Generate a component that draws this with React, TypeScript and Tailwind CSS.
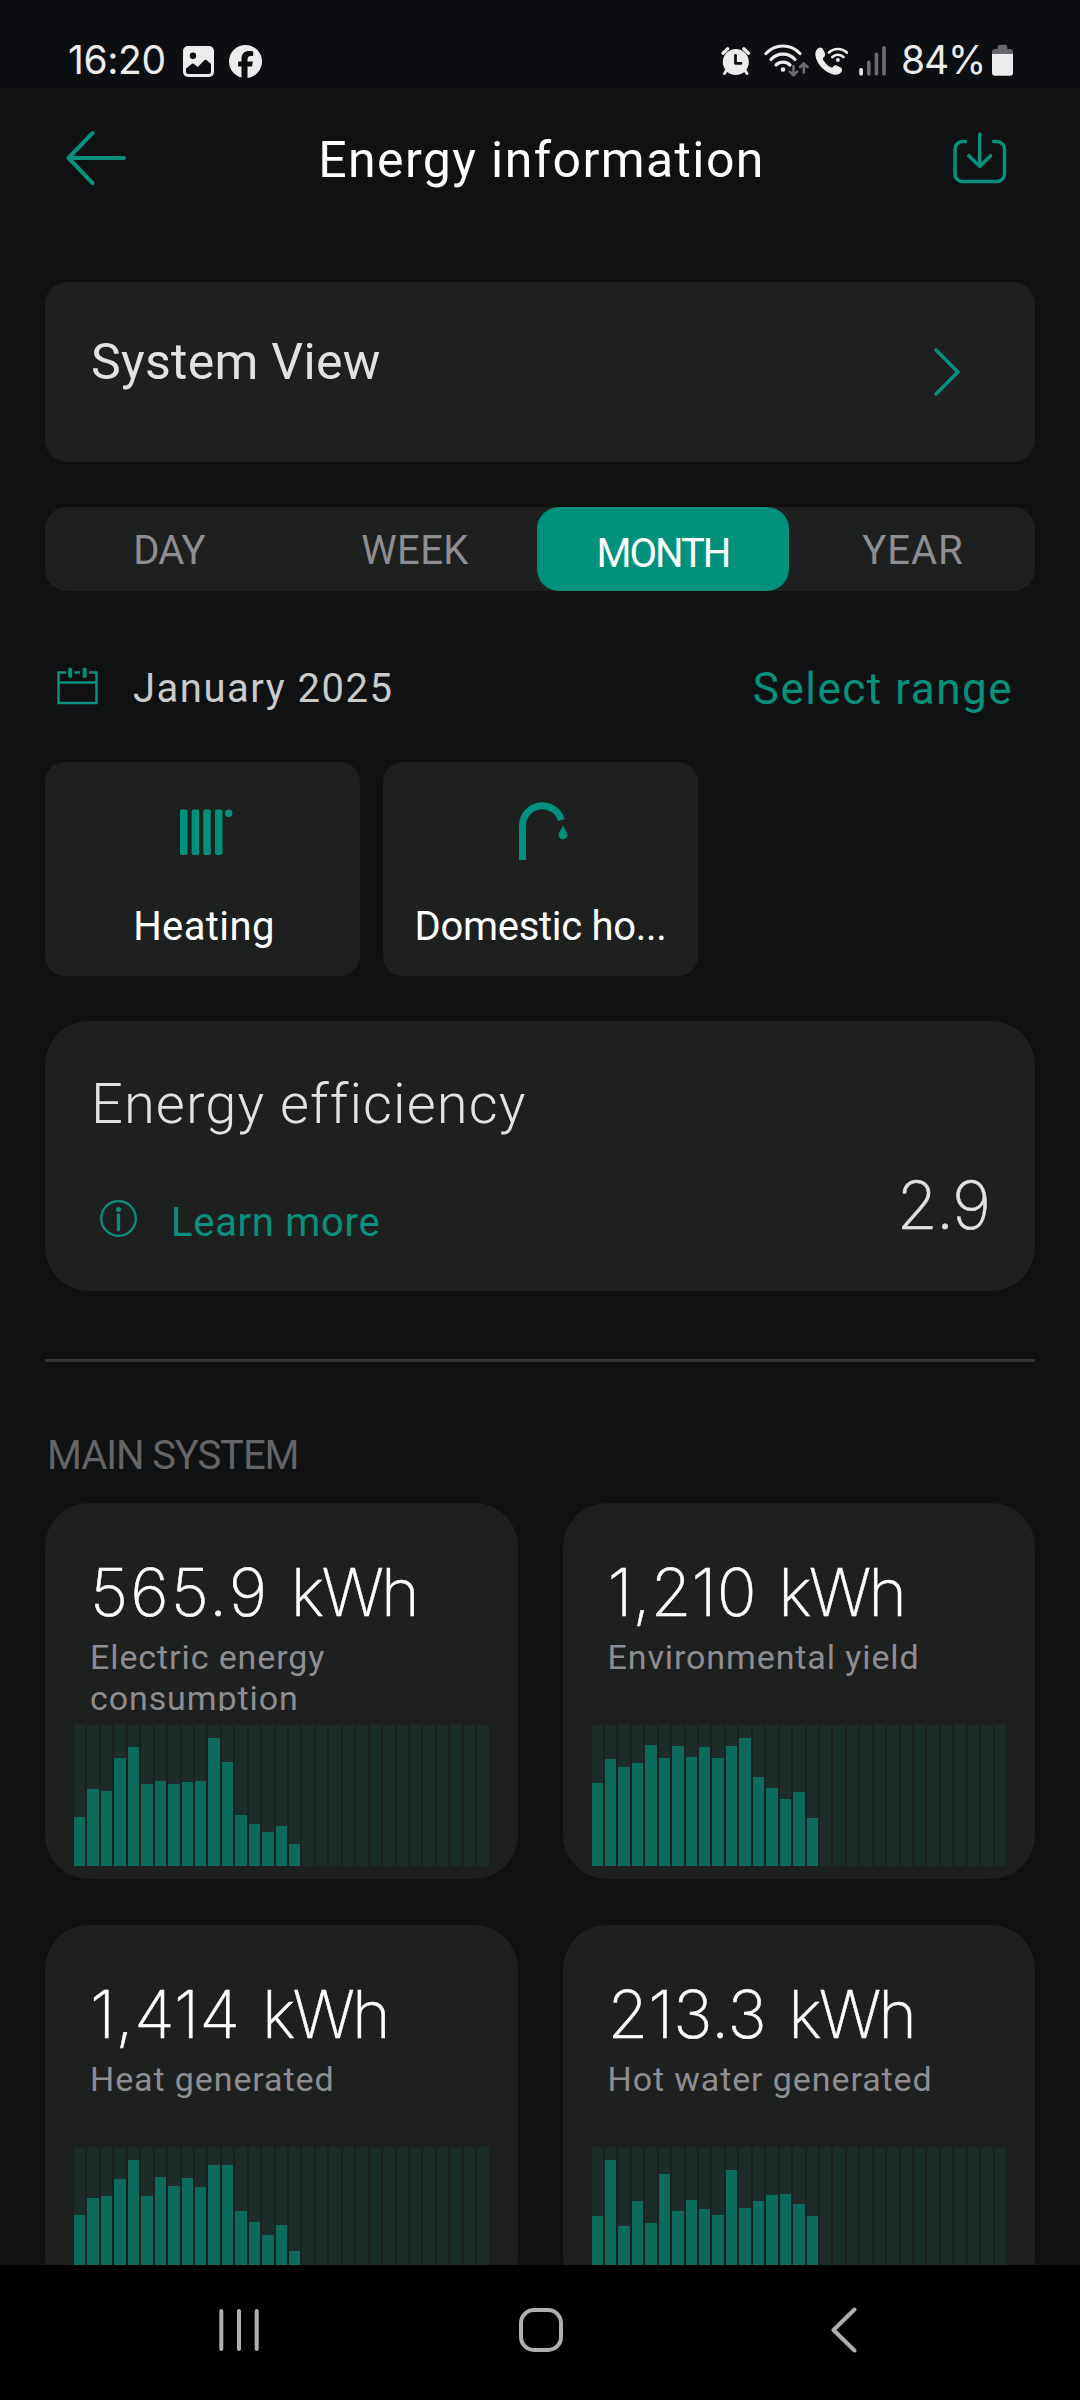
import React, { useState } from 'react'
import { FaFacebook } from 'react-icons/fa6'

interface EnergyCardProps {
  value: string
  label: string
  tracking: string
  bars: number[]
}

const DAYS_IN_MONTH = 31
const CHART_HEIGHT = 141

const cards: EnergyCardProps[] = [
  {
    value: '565.9',
    label: 'Electric energy consumption',
    tracking: 'tracking-[2px]',
    bars: [49, 77, 75.5, 108.5, 119, 82.5, 85.5, 82.5, 84, 85.5, 128, 104, 51, 42, 34, 40.5, 22],
  },
  {
    value: '1,210',
    label: 'Environmental yield',
    tracking: 'tracking-[0px]',
    bars: [83.5, 107, 99, 103.5, 121, 108, 120.5, 109, 119.5, 108, 120, 128, 89, 78, 67.5, 74, 48],
  },
  {
    value: '1,414',
    label: 'Heat generated',
    tracking: 'tracking-[0.4px]',
    bars: [73, 90.5, 92.5, 109, 128, 92, 111, 102, 110, 101, 123.5, 123.5, 77.5, 66, 53, 63, 37],
  },
  {
    value: '213.3',
    label: 'Hot water generated',
    tracking: 'tracking-[0px]',
    bars: [72, 128, 62, 87, 65, 114.5, 77.5, 88, 79, 73, 118.5, 80.5, 87, 93, 94.5, 84, 72.5],
  },
]

const tabs = [
  { id: 'DAY', tracking: 'tracking-[-0.8px]' },
  { id: 'WEEK', tracking: 'tracking-[0.4px]' },
  { id: 'MONTH', tracking: 'tracking-[-2px]' },
  { id: 'YEAR', tracking: 'tracking-[1px]' },
]

function StatusBar() {
  return (
    <div className="h-[88px] shrink-0 flex items-start pl-[68px] pr-[67px] bg-[#0d0e12] text-[#ececec] font-['Inter',sans-serif]">
      <span className="mt-[40px] w-[100px] text-[39px] leading-none tracking-[-0.4px]">16:20</span>
      <svg className="mt-[46px] ml-[15px]" width="31" height="31" viewBox="0 0 31 31">
        <rect width="31" height="31" rx="5" fill="currentColor" />
        <circle cx="10" cy="9.7" r="3.2" fill="#0d0e12" />
        <path d="M3 22.5 9 17.8Q9.8 17.2 10.6 17.8L14.7 21l7-6.9q.9-.9 1.8 0L28 18v7.5q0 2.5-2.5 2.5H5.5Q3 28 3 25.5z" fill="#0d0e12" />
      </svg>
      <FaFacebook className="mt-[45px] ml-[15px]" size={33} />

      {/* Alarm */}
      <svg className="mt-[46px] ml-auto" width="30" height="30" viewBox="0 0 30 30" fill="none" strokeLinecap="round">
        <circle cx="14.8" cy="16" r="13" fill="currentColor" />
        <path d="M2 7.2 6.8 2.8M27.6 7.2 22.8 2.8" stroke="currentColor" strokeWidth="3.2" />
        <path d="M5.5 24.5 3.5 27.5M24 24.5 26 27.5" stroke="currentColor" strokeWidth="3" />
        <path d="M14.5 9.5V17.3H20" stroke="#0d0e12" strokeWidth="2.8" strokeLinejoin="round" />
      </svg>

      {/* Wi-Fi with traffic arrows */}
      <svg className="mt-[44px] ml-[13px]" width="45" height="33" viewBox="0 0 45 33" fill="none" strokeLinecap="round">
        <g stroke="currentColor" strokeWidth="3.2">
          <path d="M2 9.5A23 23 0 0 1 36 9.5" />
          <path d="M7 15.5A16 16 0 0 1 31 15.5" />
          <path d="M12 21A10 10 0 0 1 26 21" />
        </g>
        <circle cx="19" cy="25.5" r="2.3" fill="currentColor" />
        <path d="M29.5 22V31M25.8 27.6 29.5 31.3 33.2 27.6M39.8 28.5V19.5M36.1 23 39.8 19.3 43.5 23" stroke="#6b6c70" strokeWidth="2.6" strokeLinejoin="round" />
      </svg>

      {/* Wi-Fi calling */}
      <svg className="mt-[46px] ml-[6px]" width="34" height="30" viewBox="0 0 34 30" fill="none" strokeLinecap="round">
        <path
          d="M3.2 2.2c2-1.5 4-.8 4.8 1l2 4.5c.6 1.3 0 2.4-1.3 3.5-1 .9-1 1.8-.3 3 1.8 3 3.6 4.9 6.8 6.9 1.2.7 2 .6 2.9-.4 1.1-1.3 2.3-1.9 3.5-1.2l4 2c1.6.8 2 2.4.9 4.2-1.6 2.6-4.6 3.6-8.2 2.7C9.2 26 1.6 17.5.4 9.4 0 6.5.8 3.9 3.2 2.2z"
          fill="currentColor"
        />
        <path d="M14 6.5A13 13 0 0 1 31.8 6.5M17.3 11A8 8 0 0 1 28.4 11" stroke="currentColor" strokeWidth="2.7" />
        <circle cx="22.9" cy="14" r="1.9" fill="currentColor" />
      </svg>

      {/* Signal */}
      <svg className="mt-[45px] ml-[10px]" width="27" height="31" viewBox="0 0 27 31">
        <rect x="0.3" y="23" width="3.6" height="7.5" rx="1.6" fill="currentColor" />
        <rect x="8" y="15.5" width="3.6" height="15" rx="1.6" fill="#6b6c70" />
        <rect x="15.6" y="7.5" width="3.6" height="23" rx="1.6" fill="#6b6c70" />
        <rect x="23.2" y="1" width="3.6" height="29.5" rx="1.6" fill="#6b6c70" />
      </svg>
      <span className="mt-[40px] w-[106px] pl-[15px] text-[39px] leading-none tracking-[-1.2px] whitespace-nowrap">84%</span>

      {/* Battery */}
      <svg className="mt-[44px]" width="21" height="32" viewBox="0 0 21 32">
        <path d="M5.7 5V3Q5.7.7 8 .7h5Q15.3.7 15.3 3V5H18q3 0 3 3v3H0V8Q0 5 3 5z" fill="#67686b" />
        <path d="M0 10H21V28.5Q21 31.7 18 31.7H3Q0 31.7 0 28.5z" fill="currentColor" />
      </svg>
    </div>
  )
}

function Header() {
  return (
    <header className="h-[140px] shrink-0 flex items-center justify-between pl-[66px] pr-[73px]">
      <button>
        <svg width="60" height="56" viewBox="0 0 60 56" fill="none" stroke="#07917d" strokeWidth="4" strokeLinecap="round" strokeLinejoin="round">
          <path d="M58 28H3M26.5 3 2.5 28 26.5 53" />
        </svg>
      </button>
      <h1 className="pt-[4px] pl-[4px] text-[50px] leading-none tracking-[1.4px] text-white">Energy information</h1>
      <button>
        <svg width="54" height="52" viewBox="0 0 54 52" fill="none" stroke="#07917d" strokeWidth="3.5" strokeLinecap="round" strokeLinejoin="round">
          <path d="M12.5 9.5H9.5A7.5 7.5 0 0 0 2 17V42A7.5 7.5 0 0 0 9.5 49.5H44A7.5 7.5 0 0 0 51.5 42V17A7.5 7.5 0 0 0 44 9.5H40.5" />
          <path d="M26.7 2V34.5M15.8 23.7 26.7 34.5 37.6 23.7" />
        </svg>
      </button>
    </header>
  )
}

function CalendarIcon() {
  return (
    <svg width="41" height="38" viewBox="0 0 41 38" fill="none" stroke="#07917d" strokeWidth="2.5">
      <path d="M9 5.5H1.5V36H39.5V5.5H32M17.5 5.5H23M1.5 15.5H39.5" />
      <path d="M13.2 2.5V9M27.6 2.5V9" strokeWidth="4" strokeLinecap="round" />
    </svg>
  )
}

function RadiatorIcon() {
  return (
    <svg width="60" height="60" viewBox="0 0 60 60" fill="#00917c">
      <rect x="7" y="7.5" width="7.5" height="45.5" rx="1.8" />
      <rect x="18.7" y="7.5" width="7.5" height="45.5" rx="1.8" />
      <rect x="30.3" y="7.5" width="7.5" height="45.5" rx="1.8" />
      <rect x="42" y="7.5" width="7.5" height="45.5" rx="1.8" />
      <circle cx="55.7" cy="11.3" r="3.7" />
    </svg>
  )
}

function TapIcon() {
  return (
    <svg className="overflow-visible" width="60" height="60" viewBox="0 0 60 60" fill="none">
      <path d="M11.5 58V23.5A19.8 19.8 0 0 1 50.3 18" stroke="#00917c" strokeWidth="7" />
      <path d="M52 23C53 27 56.5 30 56.5 32.8a4.5 4.5 0 0 1-9 0C47.5 30 51 27 52 23z" fill="#00917c" />
    </svg>
  )
}

function EnergyCard({ value, label, tracking, bars }: EnergyCardProps) {
  return (
    <div className="h-[376px] pt-[56px] bg-[#1e201f] rounded-[44px] flex flex-col">
      <p className="pl-[45px] font-['Inter',sans-serif] font-extralight text-[66px] leading-none whitespace-nowrap text-white [-webkit-text-stroke:0.5px_white]">
        <span className={tracking}>{value}</span>
        <span className="ml-[6px] tracking-[-3px]"> kWh</span>
      </p>
      <p className="mt-[12px] ml-[45px] w-[340px] h-[74px] overflow-hidden text-[34px] leading-[41px] tracking-[0.9px] text-[#8e8d92]">{label}</p>
      <div className="mt-[14px] mx-[29px] h-[141px] flex gap-[2px]">
        {Array.from({ length: DAYS_IN_MONTH }, (_, day) => (
          <div key={day} className="flex-1 flex flex-col justify-end bg-[#1b2c29]">
            <div className="bg-[#0a6b5c]" style={{ height: `${((bars[day] ?? 0) / CHART_HEIGHT) * 100}%` }} />
          </div>
        ))}
      </div>
    </div>
  )
}

function NavBar() {
  return (
    <nav className="h-[135px] shrink-0 bg-black flex items-center justify-between pl-[218px] pr-[222px] pb-[5px]">
      <svg width="42" height="46" viewBox="0 0 42 46" stroke="#b0b0b0" strokeWidth="4" strokeLinecap="round">
        <path d="M3.3 4V42M21 4V42M38.7 4V42" />
      </svg>
      <svg className="mr-[8px]" width="46" height="46" viewBox="0 0 46 46" fill="none" stroke="#b0b0b0" strokeWidth="4">
        <rect x="3" y="3" width="40" height="40" rx="13" />
      </svg>
      <svg width="28" height="46" viewBox="0 0 28 46" fill="none" stroke="#b0b0b0" strokeWidth="4" strokeLinecap="round" strokeLinejoin="round">
        <path d="M24.5 2.5 3.5 23 24.5 43.5" />
      </svg>
    </nav>
  )
}

export default function App() {
  const [range, setRange] = useState('MONTH')

  return (
    <div className="w-[1080px] h-[2400px] flex flex-col overflow-hidden bg-[#0f1112] font-['Roboto',sans-serif]">
      <StatusBar />
      <Header />

      <main className="flex-1 min-h-0 overflow-hidden px-[45px] pt-[54px]">
        {/* System view */}
        <div className="h-[180px] rounded-[22px] bg-[#1e201f] flex items-start justify-between pl-[46px] pr-[74px]">
          <span className="mt-[55px] text-[50px] leading-none tracking-[0.3px] text-[#e2e2e2]">System View</span>
          <svg className="mt-[65px]" width="28" height="50" viewBox="0 0 28 50" fill="none" stroke="#07917d" strokeWidth="3.5" strokeLinecap="round" strokeLinejoin="round">
            <path d="M3 3 25 25 3 47" />
          </svg>
        </div>

        {/* Range tabs */}
        <div className="mt-[45px] h-[84px] rounded-[22px] bg-[#1e201f] flex">
          {tabs.map((tab) => (
            <button
              key={tab.id}
              onClick={() => setRange(tab.id)}
              className={`flex items-start justify-center rounded-[22px] text-[40px] leading-none ${tab.tracking} ${
                range === tab.id ? 'w-[252px] pt-[27px] bg-[#00917c] text-white' : 'w-[246px] pt-[24px] pl-[2px] text-[#8e8d92]'
              }`}
            >
              {tab.id}
            </button>
          ))}
        </div>

        <div className="mt-[75px] h-[44px] flex items-start">
          <div className="ml-[12px] mt-[1px]">
            <CalendarIcon />
          </div>
          <span className="ml-[35px] mt-[3px] text-[40px] leading-none tracking-[1.5px] text-[#cbcbcb]">January 2025</span>
          <button className="ml-auto mr-[22px] mt-[1px] text-[44px] leading-none tracking-[1.5px] text-[#07917d]">Select range</button>
        </div>

        <div className="mt-[52px] flex gap-[23px]">
          <div className="w-[315px] h-[214px] pt-[40px] rounded-[20px] bg-[#1e201f] flex flex-col items-center">
            <RadiatorIcon />
            <span className="mt-[45px] pl-[3px] text-[40px] leading-none tracking-[0.4px] text-white">Heating</span>
          </div>
          <div className="w-[315px] h-[214px] pt-[40px] rounded-[20px] bg-[#1e201f] flex flex-col items-center">
            <TapIcon />
            <span className="mt-[45px] text-[40px] leading-none tracking-[-0.3px] whitespace-nowrap text-white">Domestic ho...</span>
          </div>
        </div>

        {/* Efficiency */}
        <div className="mt-[45px] h-[270px] pt-[55px] rounded-[44px] bg-[#1e201f]">
          <h2 className="pl-[46px] font-light text-[56px] leading-none tracking-[1.1px] text-[#e2e2e2]">Energy efficiency</h2>
          <div className="mt-[38px] pl-[54px] pr-[46px] flex items-start">
            <svg className="mt-[29px]" width="39" height="39" viewBox="0 0 39 39" fill="none" stroke="#07917d">
              <circle cx="19.5" cy="19.5" r="17.3" strokeWidth="2.3" />
              <path d="M19.5 16V30.5" strokeWidth="3.3" strokeLinecap="round" />
              <circle cx="19.5" cy="10.5" r="2.5" fill="#07917d" stroke="none" />
            </svg>
            <button className="ml-[33px] mt-[33px] text-[40px] leading-none tracking-[0.7px] text-[#07917d]">Learn more</button>
            <span className="ml-auto mt-[1px] font-['Inter',sans-serif] font-extralight text-[67px] leading-none tracking-[-2px] text-[#e2e2e2] [-webkit-text-stroke:0.5px_#e2e2e2]">
              2.9
            </span>
          </div>
        </div>

        <hr className="mt-[68px] h-[3px] border-0 bg-[#333333]" />

        <h3 className="mt-[74px] pl-[2px] text-[40px] leading-none tracking-[-1.1px] text-[#646466]">MAIN SYSTEM</h3>
        <div className="mt-[27px] grid grid-cols-2 gap-x-[45px] gap-y-[46px]">
          {cards.map((card) => (
            <EnergyCard key={card.label} {...card} />
          ))}
        </div>
      </main>

      <NavBar />
    </div>
  )
}
